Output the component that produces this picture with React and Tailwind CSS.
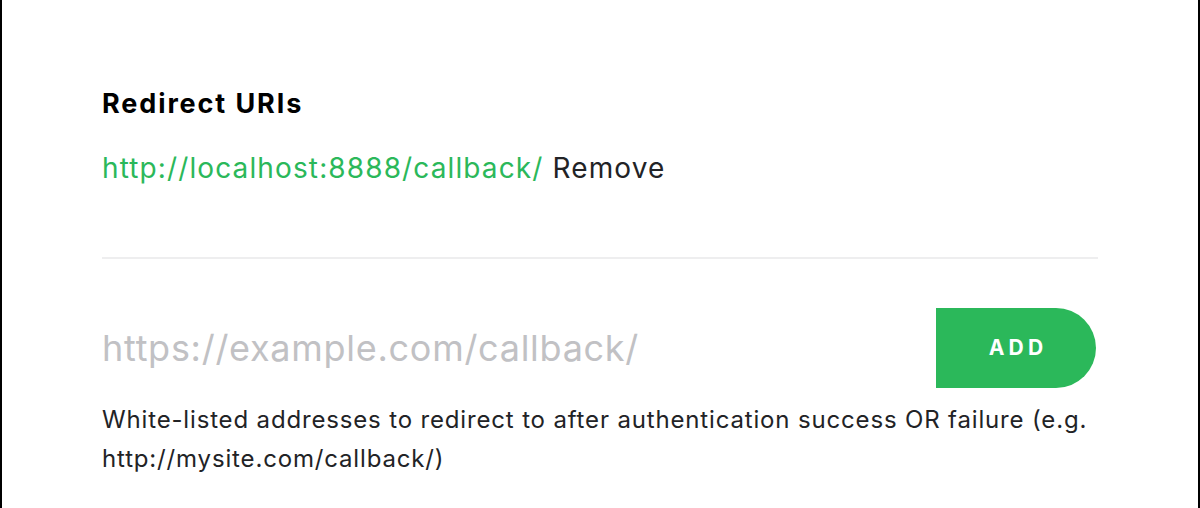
export default function App() {
  return (
    <div
      className="h-[508px] w-[1200px] overflow-hidden bg-white border-x-2 border-black text-[#222326]"
      style={{ fontFamily: 'Inter, "Noto Sans", sans-serif' }}
    >
      <div className="pl-[100px] pr-[100px] pt-[88px]">
        {/* Redirect URIs */}
        <h3 className="text-[27px] leading-[32px] font-bold tracking-[0.07em] text-black">Redirect URIs</h3>
        <div className="mt-[32px] text-[28px] leading-[32px] tracking-[0.04em]">
          <a className="text-[#2bb85a]">http://localhost:8888/callback/</a>{' '}
          <span className="text-[#222326]">Remove</span>
        </div>
        <div className="mt-[73px] h-[2px] bg-[#eeeeef]" />

        {/* Add form */}
        <div className="mt-[49px] flex items-center justify-between">
          <input
            className="flex-1 text-[36px] leading-[40px] tracking-[0.02em] outline-none placeholder:text-[#c1c1c4] bg-transparent"
            placeholder="https://example.com/callback/"
          />
          <button className="mr-[2px] h-[80px] w-[160px] rounded-r-full bg-[#2bb85a] text-white text-[21px] font-bold tracking-[0.2em] pl-[4px]">
            ADD
          </button>
        </div>
        <p className="mt-[12px] text-[24px] leading-[39px] tracking-[0.035em]">
          White-listed addresses to redirect to after authentication success OR failure (e.g.
          http://mysite.com/callback/)
        </p>
      </div>
    </div>
  );
}
